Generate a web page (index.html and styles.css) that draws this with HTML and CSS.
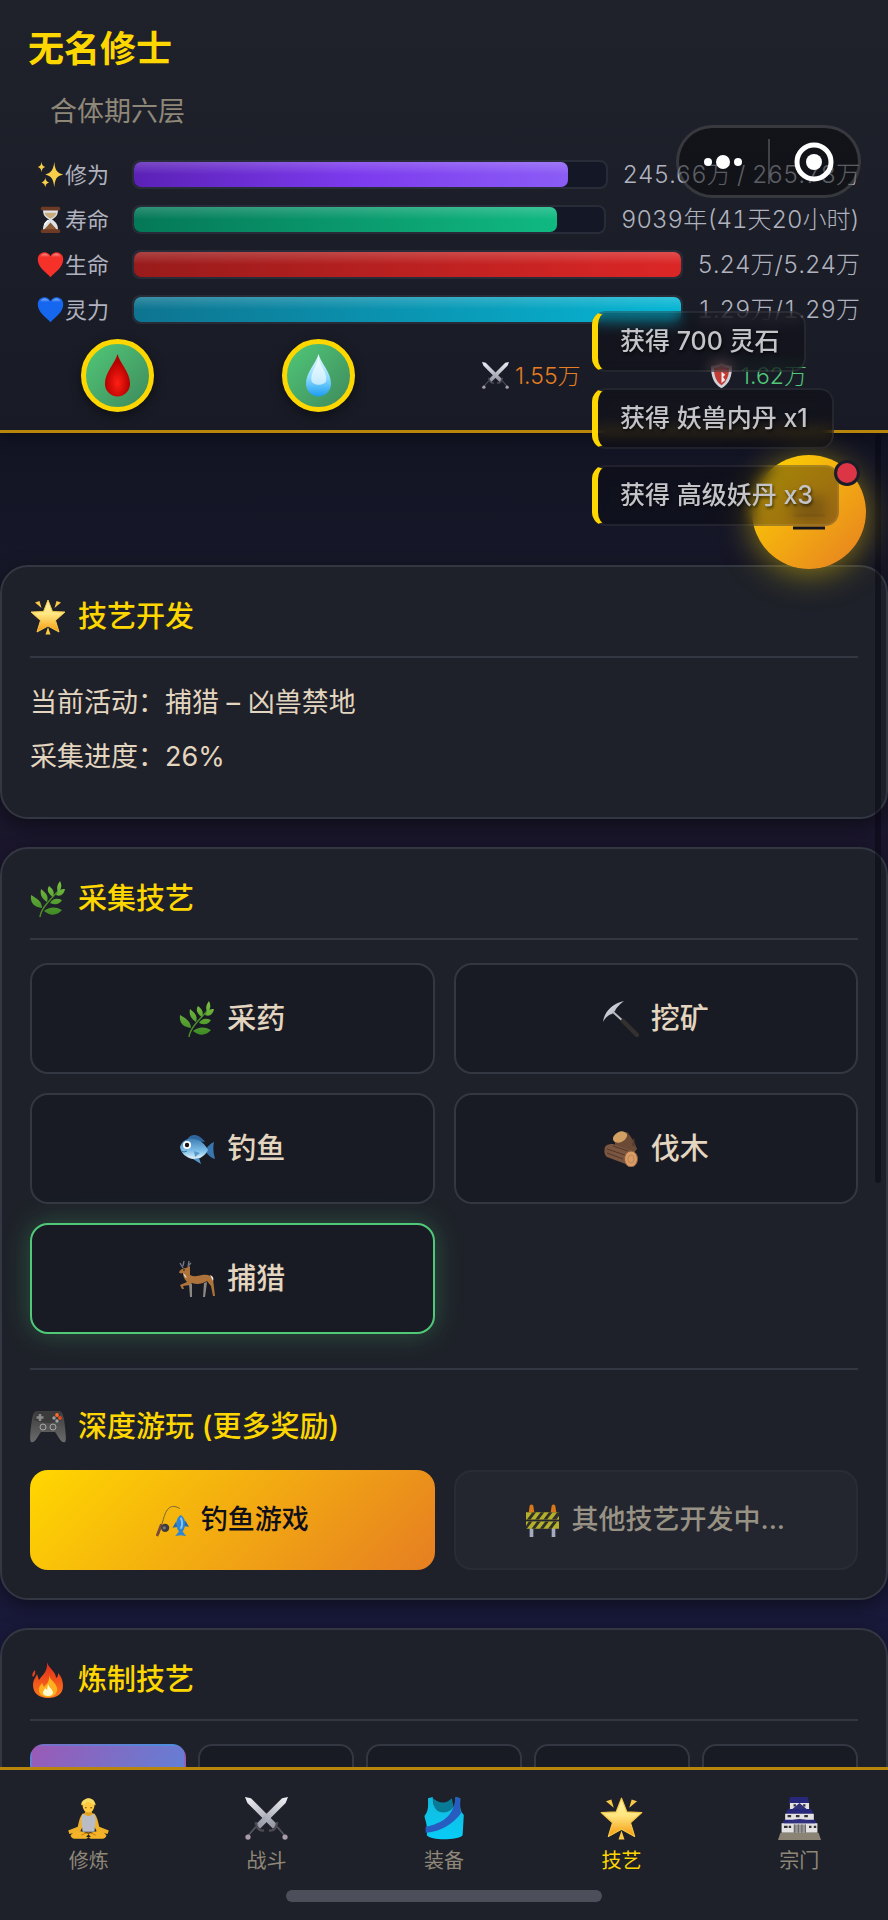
FILE: index.html
```html
<!DOCTYPE html>
<html lang="zh-CN">
<head>
<meta charset="utf-8">
<meta name="viewport" content="width=device-width, initial-scale=1">
<title>技艺</title>
<link rel="stylesheet" href="styles.css">
</head>
<body>
<svg class="sprite" aria-hidden="true">
  <defs>
    <linearGradient id="gGold" x1="0" y1="0" x2="0" y2="1"><stop offset="0" stop-color="#fff3a8"/><stop offset=".45" stop-color="#ffe680"/><stop offset="1" stop-color="#f59a0c"/></linearGradient>
    <linearGradient id="gSteel" x1="0" y1="0" x2="1" y2="1"><stop offset="0" stop-color="#f2f2f7"/><stop offset="1" stop-color="#8d8f9c"/></linearGradient>
    <linearGradient id="gLeaf" x1="0" y1="0" x2="0" y2="1"><stop offset="0" stop-color="#7cc243"/><stop offset="1" stop-color="#3f8a26"/></linearGradient>
    <linearGradient id="gFish" x1="0" y1="0" x2="0" y2="1"><stop offset="0" stop-color="#3f7fb5"/><stop offset=".6" stop-color="#7fc0ea"/><stop offset="1" stop-color="#e6f4fb"/></linearGradient>
    <linearGradient id="gFire" x1="0" y1="0" x2="0" y2="1"><stop offset="0" stop-color="#e0281c"/><stop offset="1" stop-color="#ff7a1a"/></linearGradient>
    <linearGradient id="gPad" x1="0" y1="0" x2="0" y2="1"><stop offset="0" stop-color="#3c3c3c"/><stop offset="1" stop-color="#6a6a6a"/></linearGradient>
    <linearGradient id="gVest" x1="0" y1="0" x2="0" y2="1"><stop offset="0" stop-color="#12b9dc"/><stop offset="1" stop-color="#08cdf7"/></linearGradient>
    <radialGradient id="gBlood" cx=".5" cy=".68" r=".5"><stop offset="0" stop-color="#ff1f14"/><stop offset="1" stop-color="#b30000"/></radialGradient>
    <linearGradient id="gWater" x1="0" y1="0" x2="0" y2="1"><stop offset="0" stop-color="#e9fbff"/><stop offset=".55" stop-color="#8fdcff"/><stop offset="1" stop-color="#1c9df0"/></linearGradient>
    <linearGradient id="gGlow" x1="0" y1="0" x2="0" y2="1"><stop offset="0" stop-color="#fff" stop-opacity=".5"/><stop offset=".5" stop-color="#fff" stop-opacity="0"/></linearGradient>
  </defs>
  <symbol id="i-sparkles" viewBox="0 0 36 36"><g fill="#f8cf4a"><path d="M23 1c1 10 3 15 12 17-9 2-11 6-12 17-1-11-4-15-12-17 8-2 11-7 12-17z"/><path d="M6 1c.5 4 1.500 6 5 7-3.500 1-4.500 3-5 7-.5-4-1.500-6-5-7 3.500-1 4.500-3 5-7zM11 22c.5 4 2 5.500 5 6.500-3 1-4.500 2.500-5 6.500-.5-4-2-5.500-5-6.500 3-1 4.500-2.500 5-6.500z"/></g></symbol>
  <symbol id="i-hourglass" viewBox="0 0 36 36"><path d="M8 4h20c0 8-2 10-8 14 6 4 8 7 8 14H8c0-7 2-10 8-14C10 14 8 12 8 4z" fill="#dfe3e8"/><path d="M10 9h16c-1 4-4 6-8 8-4-2-7-4-8-8z" fill="#c8ab78"/><path d="M18 22l9 10H9z" fill="#8b5a35"/><path d="M10 25c1-3 3-4 5-6" stroke="#fff" stroke-width="2" fill="none"/><rect x="5" y="1" width="26" height="5" rx="2" fill="#6d3b25"/><rect x="5" y="31" width="26" height="5" rx="2" fill="#6d3b25"/></symbol>
  <symbol id="i-heart" viewBox="0 0 36 36"><path d="M18 35C13 29 1 22 1 11 1 1 14-2 18 7c4-9 17-6 17 4 0 11-12 18-17 24z" fill="currentColor"/><path d="M4 9c1-7 10-8 13-1 1 2 1 2 2 0 3-7 12-6 13 1-3 4-7 4-14 4S7 13 4 9z" fill="url(#gGlow)"/></symbol>
  <symbol id="i-blood" viewBox="0 0 36 36"><path d="M18 0c2 8 10.500 15 10.500 25a10.500 10.500 0 0 1-21 0C7.500 15 16 8 18 0z" fill="url(#gBlood)"/></symbol>
  <symbol id="i-water" viewBox="0 0 36 36"><path d="M18 0c2 8 10.500 15 10.500 25a10.500 10.500 0 0 1-21 0C7.500 15 16 8 18 0z" fill="url(#gWater)"/><path d="M18 3c1 7 7 12 6.500 19-.5 5-12 5-12.500 0C11.500 15 17 9 18 3z" fill="#fff" opacity=".6"/></symbol>
  <symbol id="i-swords" viewBox="0 0 36 36"><g id="sword"><path d="M0 0l5 1 22 22-3.500 3.500L2 5z" fill="url(#gSteel)"/><path d="M27 25l6 7" stroke="#55535c" stroke-width="1.500"/><path d="M20 28q6 1 7-7" stroke="#4d4b54" stroke-width="2" fill="none"/><circle cx="33.500" cy="33.500" r="2.200" fill="#a79da8"/></g><use href="#sword" transform="matrix(-1 0 0 1 36 0)"/></symbol>
  <symbol id="i-shield" viewBox="0 0 36 36"><path d="M18 1c5 3 9 4 14 4 0 14-3 24-14 30C7 29 4 19 4 5c5 0 9-1 14-4z" fill="#cfd2d8"/><path d="M18 5c4 2 7 3 10 3 0 11-3 18-10 23C11 26 8 19 8 8c3 0 6-1 10-3z" fill="#c33b34"/><path d="M18 13l5 4-3 3 3 4-5 4z" fill="#eceef1"/></symbol>
  <symbol id="i-star" viewBox="0 0 36 36"><path d="M18 1l4.500 11.500L35 13l-9.500 8.500L29 33l-11-6-11 6 3.500-11.500L1 13l12.500-.5z" fill="url(#gGold)" stroke="#f7c948" stroke-width="1" stroke-linejoin="round"/><path d="M5 3.500L9.500 2l2 7zM31 3.500L26.500 2l-2 7zM18 28l2.500 7.500h-5z" fill="#f9c846"/></symbol>
  <symbol id="i-herb" viewBox="0 0 36 36"><path d="M10 36c1-8 7-14 20-28" stroke="#4c8a2c" stroke-width="1.500" fill="none"/><g fill="url(#gLeaf)"><path d="M28 11c-2-5 0-8 2-11 2 4 2 8-2 11zM23 16c-6-4-6-8-4-11 4 3 6 6 4 11zM17 21c-6-4-7-8-6-13 5 4 8 7 6 13zM12 27C4 26 0 22 1 14c7 4 11 7 11 13zM26 14c2-5 5-6 9-6-1 5-4 8-9 6zM20 22c3-5 7-5 12-3-3 5-7 5-12 3zM14 30c5-4 11-5 18-1-5 6-12 6-18 1z"/></g></symbol>
  <symbol id="i-pickaxe" viewBox="0 0 36 36"><path d="M10 11l11 10" stroke="#b9bbc2" stroke-width="2"/><path d="M20 20l14 14" stroke="#33302f" stroke-width="4.500" stroke-linecap="round"/><path d="M0 21C1 11 10 2 21 0 16 4 13 7 12 10l-3 3c-4 1-7 4-9 8z" fill="url(#gSteel)"/></symbol>
  <symbol id="i-fish" viewBox="0 0 36 36"><path d="M8 9c3-7 12-7 18 2z" fill="#2f659a"/><path d="M27 18c3-4 5-6 8-7-1 5-1 10 1 17-4-1-7-4-9-7z" fill="#3a76ad"/><path d="M1 16C3 9 9 7 15 8c7 1 11 5 14 11-3 6-9 10-15 9C7 27 2 22 1 16z" fill="url(#gFish)"/><path d="M15 20l6 2-5 4zM14 28l8 5-2-6z" fill="#5799c9"/><circle cx="8" cy="14" r="4" fill="#fff"/><circle cx="8" cy="14" r="2.200" fill="#151515"/><path d="M2 20q3 2 6 0" stroke="#3c6d95" fill="none"/></symbol>
  <symbol id="i-wood" viewBox="0 0 36 36"><path d="M12 8L24 1c5 6 8 11 10 17l-5 6-17-8z" fill="#6b4a37"/><ellipse cx="17" cy="6" rx="7.500" ry="5" transform="rotate(-28 17 6)" fill="#d2a063"/><path d="M29 14l2-8 1 10z" fill="#5a3c2c"/><path d="M2 16c2-3 5-3 8-3l22 8-4 14-24-9c-3-2-3-7-2-10z" fill="#7a5641"/><path d="M4 18l18 6M4 22l16 6M10 15l18 6" stroke="#523628" stroke-width="1"/><ellipse cx="28" cy="28" rx="6.500" ry="8" fill="#d79c68" stroke="#8b5b3c"/><ellipse cx="28" cy="28" rx="3" ry="4" fill="none" stroke="#c2854f"/></symbol>
  <symbol id="i-deer" viewBox="0 0 36 36"><path d="M4 7L1 2M4 5l1-5M9 6l1-6M9 5l3-3" stroke="#777a86" stroke-width="1.300"/><path d="M0 11c2-3 4-4 7-4l4-2v4l0 5c4 2 8 1 12 0 5-1 9 0 11 4l2 17h-2l-2-10-4-5c-5 3-10 4-15 2l-2 2-7 1 1 3-2 0-2-4 7-3c-3-3-4-6-4-9-2 1-4 0-4-1z" fill="#ae733a"/><path d="M13 23l0 13h-2L10 23zM28 21l-1 8-1 7h-2l1-14z" fill="#8d8782"/><path d="M31 14c3 1 4 3 3 6z" fill="#f0ece6"/><circle cx="5" cy="9" r=".8" fill="#1c120b"/><path d="M4 12q3 2 4 5l-2-1z" fill="#f1e5d8"/></symbol>
  <symbol id="i-gamepad" viewBox="0 0 36 36"><path d="M7 2h22c3 0 4 3 5 8 1 7 3 22 1 23-4 2-8-8-10-10H11C9 25 5 35 1 33-1 31 1 17 2 10c1-5 2-8 5-8z" fill="url(#gPad)"/><path d="M7 3h22l3 8c-9 4-19 4-28 0z" fill="#3a3b3a"/><path d="M10 5v7M6.500 8.500h7" stroke="#8b8b8b" stroke-width="2.500"/><g fill="#9aa0a0"><circle cx="24" cy="9" r="1.700"/><circle cx="27" cy="12" r="1.700"/></g><circle cx="27" cy="6" r="1.900" fill="#ff6a2a"/><circle cx="30" cy="9" r="1.900" fill="#e8491b"/><g fill="#555" stroke="#a7a7a7"><circle cx="13" cy="18" r="3"/><circle cx="23" cy="18" r="3"/></g></symbol>
  <symbol id="i-rod" viewBox="0 0 36 36"><path d="M3 33L8 17C11 5 16-1 26 5" stroke="#6b5f3c" stroke-width="1" fill="none"/><path d="M1 35l5-13" stroke="#7b4a38" stroke-width="3"/><circle cx="10" cy="26" r="4.500" fill="#3c3c40"/><circle cx="9" cy="26" r="1.800" fill="#77777c"/><path d="M27 12c5 3 7 11 2 18l4 5-6-1-6 1 4-5c-5-7-3-15 2-18z" fill="#2e86d6"/><path d="M32 18l4 7-5-1zM22 19l-4 7 5-1z" fill="#2769ae"/><path d="M27 15q3 6 0 12" stroke="#8cc8f2" stroke-width="2" fill="none"/></symbol>
  <symbol id="i-barrier" viewBox="0 0 36 36"><path d="M4 26h4v10H4zM28 26h4v10h-4z" fill="#a5abc0"/><rect x="0" y="9" width="36" height="8" fill="#b5b02c"/><rect x="0" y="19" width="36" height="8" fill="#b5b02c"/><path d="M1 17l6-8h4l-6 8zM10 17l6-8h4l-6 8zM19 17l6-8h4l-6 8zM28 17l6-8h2v4l-3 4zM0 24l3-5h4l-6 8H0zM6 27l6-8h4l-6 8zM15 27l6-8h4l-6 8zM24 27l6-8h4l-6 8z" fill="#30302b"/><path d="M3 9l1-7q2-3 4 0l1 7zM27 9l1-7q2-3 4 0l1 7z" fill="#d97818"/></symbol>
  <symbol id="i-fire" viewBox="0 0 36 36"><path d="M17 0c1 6 9 9 9 16 2-1 2-3 2-5 4 4 5 9 5 13 0 8-6 12-15 12S3 31 3 23c0-5 3-8 4-11 1 2 1 4 2 6 3-5 9-8 8-18zM5 8q1 4-2 7-2-3 2-7z" fill="url(#gFire)"/><path d="M19 12c0 6 7 8 8 14 1 6-4 9-9 9S8 32 9 27c0-3 2-4 3-6l2 4c3-3 6-6 5-13z" fill="#ffb01f"/><path d="M18 22c1 4 5 5 5 9s-10 4-10 0c0-3 2-3 2-5l2 2z" fill="#fffbd0"/></symbol>
  <symbol id="i-lotus" viewBox="0 0 36 36"><path d="M13 14c3-1 7-1 10 0 2 2 3 6 4 11l8 3-1 3-9-2-4-8h-6l-4 8-9 2-1-3 8-3c1-5 2-9 4-11z" fill="#efb12a"/><path d="M13 14c3 2 7 2 10 0l1 5-1 10H13l-1-10z" fill="#b9bcc4"/><path d="M15 9h6v5q-3 4-6 0z" fill="#e2a021"/><ellipse cx="18" cy="7" rx="5" ry="6" fill="#ffc93f"/><path d="M12 7c-1-6 11-9 12 0-3-1-5-3-7-3q-2 2-5 3z" fill="#f7dc62"/><path d="M3 32c3-4 8-4 13-2l4 3-4 2H6q-3-1-3-3zM33 32c-3-4-8-4-13-2l-4 3 4 2h10q3-1 3-3z" fill="#f5b428"/><path d="M12 32q6-4 12 0" stroke="#c98413" fill="none"/><path d="M15 9h1.500M19.500 9H21" stroke="#6b4313" stroke-width=".8"/></symbol>
  <symbol id="i-vest" viewBox="0 0 36 36"><path d="M9 1q9 7 16 0l2 11-4 4H11z" fill="#087b96"/><path d="M5 1l4-1c0 10 4 13 9 13S29 9 28 0l4 1c0 6-1 10 3 14l-1 17c-3 4-26 5-30 0 1-6-1-12-2-16 4-5 3-10 3-15z" fill="url(#gVest)"/><path d="M28 0l4 1c0 5-1 9 1 12C27 22 16 29 3 30v-5C17 22 27 16 28 0z" fill="#275cc0"/></symbol>
  <symbol id="i-castle" viewBox="0 0 36 36"><path d="M10 0h15l1 5H9zM7 12l4-4h14l4 4v3H7zM4 21l3-4h22l3 4v2H4z" fill="#28287a"/><path d="M10 5h16v5H10zM6 14h24v5H6zM3 22h30v8H3z" fill="#e5e2e3"/><path d="M12 10l6-5 6 5zM8 21q10-5 20 0l3 1H5z" fill="#30307c"/><path d="M2 30h32l2 6H0z" fill="#8b8373"/><path d="M13 23h10v7H13z" fill="#999"/><path d="M14 23v7M17 23v7M20 23v7M23 23v7" stroke="#555" stroke-width=".7"/><path d="M8 16h3M15 16h3M22 16h3M5 25h3M9 25h2M26 25h2M30 25h2M13 7h2M21 7h2" stroke="#333" stroke-width="1.800"/></symbol>
</svg>

<div class="app">
  <header class="status">
    <h1 class="name">无名修士</h1>
    <p class="realm">合体期六层</p>
    <div class="bars">
      <div class="bar-row"><span class="bar-label"><svg class="ico"><use href="#i-sparkles"/></svg>修为</span><div class="track"><div class="fill exp" style="width:92%"></div></div><span class="bar-value">245.66万 / 265.78万</span></div>
      <div class="bar-row"><span class="bar-label"><svg class="ico"><use href="#i-hourglass"/></svg>寿命</span><div class="track"><div class="fill life" style="width:90%"></div></div><span class="bar-value">9039年(41天20小时)</span></div>
      <div class="bar-row"><span class="bar-label"><svg class="ico red"><use href="#i-heart"/></svg>生命</span><div class="track"><div class="fill hp" style="width:100%"></div></div><span class="bar-value">5.24万/5.24万</span></div>
      <div class="bar-row"><span class="bar-label"><svg class="ico blue"><use href="#i-heart"/></svg>灵力</span><div class="track"><div class="fill mp" style="width:100%"></div></div><span class="bar-value">1.29万/1.29万</span></div>
    </div>
    <div class="stats">
      <button class="potion" aria-label="生命药水"><svg><use href="#i-blood"/></svg></button>
      <button class="potion" aria-label="灵力药水"><svg><use href="#i-water"/></svg></button>
      <span class="stat attack"><svg class="ico"><use href="#i-swords"/></svg>1.55万</span>
      <span class="stat defence"><svg class="ico"><use href="#i-shield"/></svg>1.62万</span>
    </div>
  </header>

  <main class="content">
    <section class="card">
      <h2 class="card-title ruled"><svg class="ico"><use href="#i-star"/></svg>技艺开发</h2>
      <p class="line">当前活动：捕猎 – 凶兽禁地</p>
      <p class="line">采集进度：26%</p>
    </section>

    <section class="card">
      <h2 class="card-title ruled"><svg class="ico"><use href="#i-herb"/></svg>采集技艺</h2>
      <div class="grid skills">
        <button class="skill"><svg class="ico"><use href="#i-herb"/></svg>采药</button>
        <button class="skill"><svg class="ico"><use href="#i-pickaxe"/></svg>挖矿</button>
        <button class="skill"><svg class="ico"><use href="#i-fish"/></svg>钓鱼</button>
        <button class="skill"><svg class="ico"><use href="#i-wood"/></svg>伐木</button>
        <button class="skill active"><svg class="ico"><use href="#i-deer"/></svg>捕猎</button>
      </div>
      <div class="games">
        <h3 class="card-title"><svg class="ico"><use href="#i-gamepad"/></svg>深度游玩 (更多奖励)</h3>
        <div class="grid">
          <button class="game primary"><svg class="ico"><use href="#i-rod"/></svg>钓鱼游戏</button>
          <button class="game pending" disabled><svg class="ico"><use href="#i-barrier"/></svg>其他技艺开发中...</button>
        </div>
      </div>
    </section>

    <section class="card">
      <h2 class="card-title ruled"><svg class="ico"><use href="#i-fire"/></svg>炼制技艺</h2>
      <div class="tiles">
        <button class="tile selected" aria-label="炼制一"></button>
        <button class="tile" aria-label="炼制二"></button>
        <button class="tile" aria-label="炼制三"></button>
        <button class="tile" aria-label="炼制四"></button>
        <button class="tile" aria-label="炼制五"></button>
      </div>
    </section>
  </main>

  <nav class="tabs">
    <div class="tab-list">
      <a class="tab" href="#train"><svg><use href="#i-lotus"/></svg>修炼</a>
      <a class="tab" href="#battle"><svg><use href="#i-swords"/></svg>战斗</a>
      <a class="tab" href="#gear"><svg><use href="#i-vest"/></svg>装备</a>
      <a class="tab current" href="#craft" aria-current="page"><svg><use href="#i-star"/></svg>技艺</a>
      <a class="tab" href="#sect"><svg><use href="#i-castle"/></svg>宗门</a>
    </div>
    <div class="home-bar"></div>
  </nav>

  <div class="scroll-thumb"></div>

  <button class="fab" aria-label="菜单"><svg viewBox="0 0 32 34"><path d="M0 7h32M0 20h32M0 33h32" stroke="#14141f" stroke-width="3"/></svg></button>

  <div class="toasts" role="status">
    <div class="toast">获得 700 灵石</div>
    <div class="toast">获得 妖兽内丹 x1</div>
    <div class="toast">获得 高级妖丹 x3</div>
  </div>
  <span class="fab-dot"></span>

  <div class="capsule">
    <button class="capsule-btn" aria-label="更多"><svg viewBox="0 0 40 16"><circle cx="5" cy="8" r="4" fill="#fff"/><circle cx="20" cy="8" r="7" fill="#fff"/><circle cx="35" cy="8" r="4" fill="#fff"/></svg></button>
    <button class="capsule-btn" aria-label="关闭"><svg viewBox="0 0 40 40"><circle cx="20" cy="20" r="17" fill="none" stroke="#fff" stroke-width="5"/><circle cx="20" cy="20" r="8" fill="#fff"/></svg></button>
  </div>
</div>
</body>
</html>
```

FILE: styles.css
```css
:root {
  --gold: #ffd700;
  --line: #333741;
  --card: #1e2129;
  --well: #181b24;
  --text: #e3d5bf;
  --muted: #8f8879;
}

* { box-sizing: border-box; }

body {
  margin: 0;
  font-family: Inter, "Noto Sans CJK SC", sans-serif;
  color: var(--text);
  background: #131322;
}

h1, h2, h3, p { margin: 0; }

button {
  margin: 0;
  padding: 0;
  border: 0;
  font: inherit;
  color: inherit;
  background: none;
}

svg { display: block; flex: none; }

.sprite { position: absolute; width: 0; height: 0; }

.app {
  position: relative;
  display: flex;
  flex-direction: column;
  height: 100vh;
  overflow: hidden;
  background: linear-gradient(180deg, #121424 22%, #171829 32%, #1b162d 45%, #191a3b 85%);
}

/* Character status */
.status {
  position: relative;
  padding: 25px 28px 18px;
  border-bottom: 3px solid #b8860b;
  background: linear-gradient(180deg, #1f222b, #181a25);
  box-shadow: 0 4px 16px rgba(0, 0, 0, .4);
}

.name {
  font-size: 36px;
  line-height: 48px;
  font-weight: 600;
  color: var(--gold);
}

.realm {
  margin-top: 21px;
  padding-left: 22px;
  font-size: 27px;
  line-height: 36px;
  color: var(--muted);
}

.bars {
  display: grid;
  gap: 16px;
  margin-top: 30px;
}

.bar-row {
  display: flex;
  align-items: center;
  gap: 15px;
  height: 29px;
  font-size: 22px;
  line-height: 28px;
  color: #b0b2bf;
}

.bar-label {
  display: flex;
  align-items: center;
  width: 89px;
  padding-left: 9px;
}

.bar-label .ico { width: 27px; height: 27px; margin-right: 1px; }
.ico.red { color: #f5312a; }
.ico.blue { color: #1667f0; }

.bar-value {
  font-size: 24px;
  font-weight: 300;
  font-variant-numeric: tabular-nums;
}

.track {
  flex: 1;
  height: 29px;
  border: 2px solid #282c38;
  border-radius: 8px;
  background: #141726;
}

.fill {
  height: 100%;
  border-radius: 7px;
}

.exp { background: linear-gradient(180deg, rgba(255, 255, 255, .18), transparent 50%), linear-gradient(90deg, #5b21b6, #7c3aed 50%, #8b5cf6); }
.life { background: linear-gradient(180deg, rgba(255, 255, 255, .18), transparent 50%), linear-gradient(90deg, #047857, #10b981); }
.hp { background: linear-gradient(180deg, rgba(255, 255, 255, .18), transparent 50%), linear-gradient(90deg, #991b1b, #dc2626); }
.mp { background: linear-gradient(180deg, rgba(255, 255, 255, .18), transparent 50%), linear-gradient(90deg, #0e7490, #06b6d4); }

.stats {
  display: flex;
  align-items: center;
  justify-content: space-between;
  margin-top: 15px;
  padding: 0 53px;
}

.potion {
  display: grid;
  place-items: center;
  width: 73px;
  height: 73px;
  border: 5px solid var(--gold);
  border-radius: 50%;
  background: linear-gradient(135deg, #50c878, #3f8a5c);
  box-shadow: 0 4px 12px rgba(0, 0, 0, .4);
}

.potion svg { width: 43px; height: 43px; }

.stat {
  display: flex;
  align-items: center;
  gap: 6px;
  font-size: 23px;
  line-height: 28px;
  font-weight: 300;
}

.stat .ico { width: 27px; height: 27px; }
.attack { color: #e67e22; }
.defence { color: #50c878; }

/* Scrolling content */
.content {
  display: flex;
  flex: 1;
  flex-direction: column;
  gap: 28px;
  min-height: 0;
  padding-top: 132px;
  overflow: hidden;
}

.card {
  flex: none;
  padding: 28px;
  border: 2px solid var(--line);
  border-radius: 28px;
  background: var(--card);
  box-shadow: 0 6px 20px rgba(0, 0, 0, .45);
}

.card-title {
  display: flex;
  align-items: center;
  gap: 12px;
  font-size: 29px;
  line-height: 44px;
  font-weight: 500;
  color: var(--gold);
}

.card-title .ico { width: 36px; height: 36px; }

.ruled {
  margin-bottom: 23px;
  padding-bottom: 17px;
  border-bottom: 2px solid var(--line);
}

.line {
  font-size: 27px;
  line-height: 44px;
  margin-bottom: 10px;
}

.grid {
  display: grid;
  grid-template-columns: 1fr 1fr;
  gap: 19px;
}

.skill {
  display: flex;
  align-items: center;
  justify-content: center;
  gap: 12px;
  height: 111px;
  border: 2px solid var(--line);
  border-radius: 18px;
  background: var(--well);
  font-size: 29px;
  line-height: 36px;
  font-weight: 500;
}

.skill .ico { width: 36px; height: 36px; }

.skill.active {
  border-color: #50c878;
  box-shadow: 0 0 28px rgba(80, 200, 120, .3);
}

.games {
  margin-top: 34px;
  padding-top: 35px;
  border-top: 2px solid var(--line);
}

.games .card-title { margin-bottom: 21px; }

.game {
  display: flex;
  align-items: center;
  justify-content: center;
  gap: 12px;
  height: 100px;
  border-radius: 18px;
  font-size: 27px;
  line-height: 36px;
  font-weight: 500;
}

.game .ico { width: 33px; height: 33px; }

.primary {
  color: #0f0f1a;
  background: linear-gradient(135deg, #ffd700, #e67e22);
}

.pending {
  border: 2px solid #292c35;
  color: #989285;
  background: #23262f;
}

.tiles {
  display: grid;
  grid-template-columns: repeat(5, 1fr);
  gap: 12px;
}

.tile {
  height: 100px;
  border: 2px solid var(--line);
  border-radius: 14px;
  background: var(--well);
}

.tile.selected {
  border-color: transparent;
  background: linear-gradient(135deg, #9b59b6, #4a90e2);
}

/* Bottom navigation */
.tabs {
  position: relative;
  padding: 27px 0 18px;
  border-top: 3px solid #b8860b;
  background: var(--card);
}

.tab-list {
  display: grid;
  grid-template-columns: repeat(5, 1fr);
}

.tab {
  display: flex;
  flex-direction: column;
  align-items: center;
  gap: 6px;
  font-size: 20px;
  line-height: 30px;
  color: var(--muted);
  text-decoration: none;
}

.tab svg { width: 43px; height: 43px; }
.tab.current { color: var(--gold); }

.home-bar {
  width: 316px;
  height: 12px;
  margin: 14px auto 0;
  border-radius: 6px;
  background: #4c4f59;
}

/* Overlays */
.scroll-thumb {
  position: absolute;
  top: 434px;
  right: 7px;
  width: 6px;
  height: 749px;
  border-radius: 3px;
  background: rgba(5, 5, 15, .45);
}

.fab {
  position: absolute;
  top: 455px;
  right: 22px;
  display: grid;
  place-items: center;
  width: 114px;
  height: 114px;
  border-radius: 50%;
  background: linear-gradient(135deg, #ffd700, #e67e22);
  box-shadow: 0 4px 32px rgba(255, 215, 0, .5);
}

.fab svg { width: 32px; height: 34px; overflow: visible; }

.fab-dot {
  position: absolute;
  top: 460px;
  right: 28px;
  width: 26px;
  height: 26px;
  border: 3px solid #1a1c28;
  border-radius: 50%;
  background: #dc3545;
}

.toasts {
  position: absolute;
  top: 311px;
  right: 49px;
  display: flex;
  flex-direction: column;
  align-items: flex-start;
  gap: 16px;
}

.toast {
  padding: 0 24px 0 22px;
  border: 2px solid rgba(255, 255, 255, .08);
  border-left: 6px solid var(--gold);
  border-radius: 14px;
  background: rgba(8, 8, 14, .36);
  backdrop-filter: blur(7px);
  font-size: 25px;
  line-height: 57px;
  font-weight: 500;
  color: #c4c4c8;
  text-shadow: 1px 2px 3px rgba(0, 0, 0, .6);
}

.capsule {
  position: absolute;
  top: 125px;
  right: 27px;
  display: flex;
  align-items: center;
  width: 185px;
  height: 73px;
  border: 3px solid rgba(255, 255, 255, .16);
  border-radius: 37px;
  background: rgba(8, 8, 10, .5);
}

.capsule-btn {
  display: grid;
  flex: 1;
  place-items: center;
  height: 45px;
}

.capsule-btn svg { width: 40px; }
.capsule-btn + .capsule-btn { border-left: 2px solid rgba(255, 255, 255, .2); }
```
